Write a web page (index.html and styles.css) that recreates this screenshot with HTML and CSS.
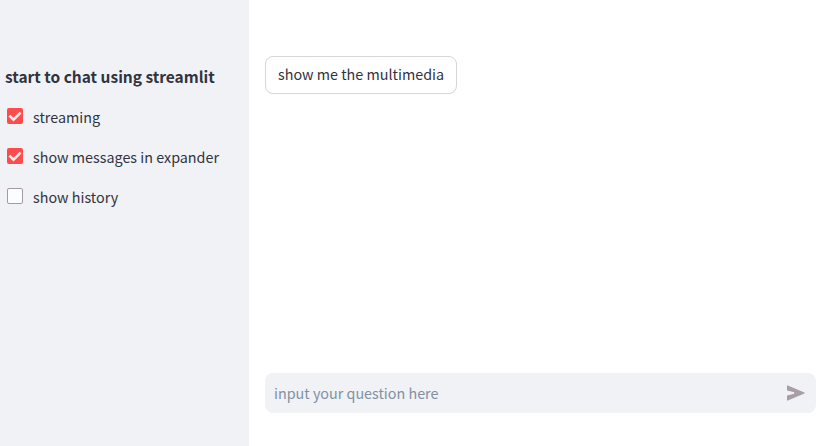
FILE: index.html
```html
<!DOCTYPE html>
<html lang="en">
<head>
<meta charset="utf-8">
<title>Streamlit chat</title>
<link rel="stylesheet" href="styles.css">
</head>
<body>
<div class="app">
  <aside class="sidebar">
    <h1 class="title">start to chat using streamlit</h1>
    <label class="option"><span class="box checked"><svg viewBox="0 0 16 16"><path d="M2.4 7.6 6.5 11.6 13.6 4.6"/></svg></span><span class="label">streaming</span></label>
    <label class="option"><span class="box checked"><svg viewBox="0 0 16 16"><path d="M2.4 7.6 6.5 11.6 13.6 4.6"/></svg></span><span class="label">show messages in expander</span></label>
    <label class="option"><span class="box"></span><span class="label">show history</span></label>
  </aside>
  <main class="chat">
    <button class="suggestion">show me the multimedia</button>
    <div class="composer">
      <span class="placeholder">input your question here</span>
      <svg class="send" viewBox="0 0 18 16"><path d="M0 .9Q0 .1.8.4L17.4 7.4Q18 8 17.4 8.6L.8 15.6Q0 15.9 0 15.1V10.4L7.2 8.7V7.3L0 5.6Z"/></svg>
    </div>
  </main>
</div>
</body>
</html>
```

FILE: styles.css
```css
* {
  box-sizing: border-box;
}

body {
  margin: 0;
  font: 14.35px/24px "Noto Sans CJK SC", "Noto Sans", sans-serif;
  color: #31333f;
  background: #fff;
}

.app {
  display: flex;
  height: 446px;
  overflow: hidden;
  white-space: nowrap;
}

.sidebar {
  width: 249px;
  padding: 64px 0 0 5px;
  background: #f0f2f6;
}

.title {
  margin: 0 0 17px;
  font-size: 15.5px;
  line-height: 24px;
  font-weight: 600;
  letter-spacing: -0.02px;
}

.option {
  display: flex;
  width: 230px;
  height: 24px;
  margin-bottom: 16px;
  padding-left: 2px;
}

.box {
  width: 16px;
  height: 16px;
  margin: 3px 10px 0 0;
  border: 1px solid #a49ba0;
  border-radius: 2px;
  background: #fcfdff;
}

.box.checked {
  border: 0;
  background: #ff4b4b;
}

.box svg {
  display: block;
  fill: none;
  stroke: #f0f2f6;
  stroke-width: 2.6;
}

.chat {
  display: flex;
  flex: 1;
  flex-direction: column;
  justify-content: space-between;
  align-items: flex-start;
  padding: 56px 7px 33px 16px;
}

.suggestion {
  width: 192px;
  height: 38px;
  padding: 0 12px 2px;
  border: 1px solid #d6d6d9;
  border-radius: 8px;
  background: #fff;
  color: inherit;
  font: inherit;
  text-align: left;
}

.composer {
  display: flex;
  justify-content: space-between;
  align-items: center;
  width: 551px;
  height: 40px;
  padding: 0 11px 0 9px;
  border-radius: 8px;
  background: #f0f2f6;
}

.placeholder {
  color: #8290a2;
}

.send {
  width: 18px;
  height: 16px;
  fill: #a89ea4;
}
```
